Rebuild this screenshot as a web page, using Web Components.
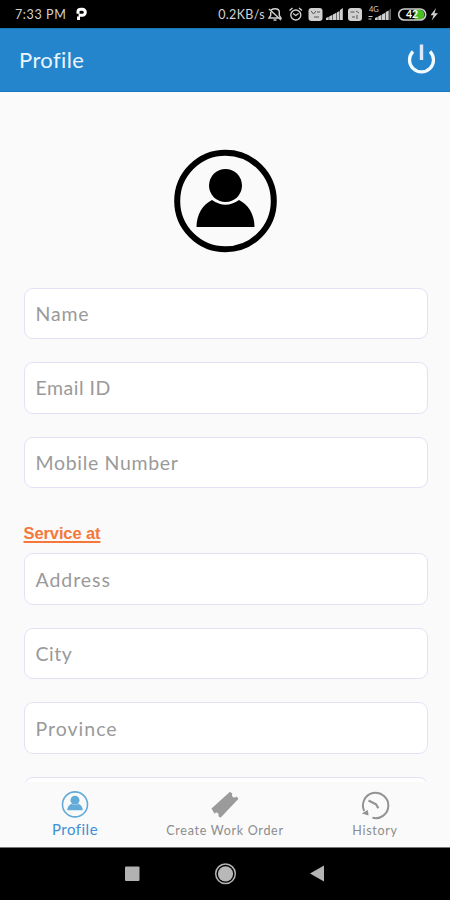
<!DOCTYPE html>
<html lang="en">
<head>
<meta charset="utf-8">
<title>Profile</title>
<style>
  body { margin: 0; background: #fafafa; }
</style>
</head>
<body>
<profile-screen></profile-screen>
<script>
const define = (name, html) => {
  const template = document.createElement('template');
  template.innerHTML = html;
  customElements.define(name, class extends HTMLElement {
    constructor() {
      super();
      this.attachShadow({ mode: 'open' }).append(template.content.cloneNode(true));
    }
  });
};

define('status-bar', `
<style>
  :host { display: flex; align-items: center; height: 28px; box-sizing: border-box; padding: 0 11px 0 15px; background: #000; color: #d2d2d2; font: 12.500px/28px Lato, sans-serif; }
  .time { width: 54px; white-space: nowrap; letter-spacing: .6px; padding-top: 1px; }
  .brand { margin-left: 7px; }
  .rate { margin-left: auto; margin-right: 2px; white-space: nowrap; font-size: 12.500px; letter-spacing: .35px; padding-top: 1px; }
  svg { display: block; flex: none; }
</style>
<span class="time">7:33 PM</span>
<svg class="brand" width="12" height="14" viewBox="0 0 12 14"><path d="M2.500 13V9.500M2 6.800V4.500Q2 2.200 5 2.200h1.300a3 3 0 0 1 0 6H2.600" fill="none" stroke="#fff" stroke-width="3"/></svg>
<span class="rate">0.2KB/s</span>
<svg width="172" height="28" viewBox="267 0 172 28" fill="none" stroke="#d0d0d0" stroke-width="1.400">
  <path d="M269 18h12l-1.700-2.500v-3.200q0-3.500-4.300-3.500t-4.300 3.500v3.200zM273.500 20h3M269 9l12 11"/>
  <circle cx="295.800" cy="15" r="5"/><path d="M289.500 10.500l3-2.500M302 10.500l-3-2.500M293 13.500l2.800 2 2.800-2"/>
  <g fill="#d0d0d0" stroke="none">
    <rect x="308.500" y="8" width="14" height="13" rx="3"/>
    <rect x="348" y="8" width="14" height="13" rx="3"/>
    <path d="M326 20v-2l2.700-1.300V20zM329.200 20v-3.600l3.300-1.600V20zM333 20v-5.600l3.300-1.600V20zM336.800 20v-7.500l2.700-1.500v9zM340 20V10l2.800-2v12z"/>
    <path d="M375 20v-2l2.700-1.300V20zM378.200 20v-3.600l3.300-1.600V20zM382 20v-5.600l3.200-1.600V20z"/>
    <path d="M385.700 20v-8l3-1.600V20z"/>
    <path d="M389.300 20V10l1.700-1.500V20z" fill="#666"/>
    <path d="M436 8l-5.500 7.200h3l-1.800 5.300 6.300-7.300h-3.500z"/>
  </g>
  <path d="M311 11l2.500 3 2.500-3M317 12h3M314 17h5M350.500 12h4M356 11l3 2M352 17h3M357 15v4" stroke="#555" stroke-width="1"/>
  <path d="M368.500 16.500h4M368.500 19h3" stroke-width="1.200"/>
  <text x="369" y="11.500" fill="#d0d0d0" stroke="none" font-family="Lato, sans-serif" font-size="7.500">4G</text>
  <path d="M414.500 9.200h4.500a5.300 5.300 0 0 1 0 10.600h-4.500z" fill="#48bd21" stroke="none"/>
  <rect x="398.700" y="9" width="27" height="11" rx="5.500" stroke-width="1.600"/>
  <text x="406" y="18.300" fill="#fff" stroke="none" font-family="Lato, sans-serif" font-weight="bold" font-size="10.500">42</text>
</svg>`);

define('app-header', `
<style>
  :host { display: flex; align-items: center; justify-content: space-between; height: 64px; box-sizing: border-box; padding: 0 13px 0 19px; background: #2485cc; color: #eaf6ff; border-top: 1px solid #1b78b8; border-bottom: 1px solid #1779c4; font: 22px/30px Lato, sans-serif; letter-spacing: .4px; }
  svg { display: block; }
</style>
<span><slot></slot></span>
<svg width="31" height="34" viewBox="406 43 31 34" fill="none"><path d="M413 51.500a12 12 0 1 0 17 0" stroke="#f4fbff" stroke-width="3.200"/><path d="M421.500 44.500v15.500" stroke="#dce8ff" stroke-width="3.400"/></svg>`);

define('profile-avatar', `
<style>
  :host { display: block; width: 104px; height: 104px; margin: 0 auto; }
  svg { display: block; width: 100%; height: 100%; }
</style>
<svg viewBox="0 0 104 104"><circle cx="51.500" cy="52" r="48.300" fill="none" stroke="currentColor" stroke-width="6"/><circle cx="51.500" cy="36.500" r="16.500" fill="currentColor"/><path d="M38 51q13.500 9.500 27 0C74 55.500 80.500 65 80.500 78h-58C22.500 65 29 55.500 38 51z" fill="currentColor"/></svg>`);

define('form-field', `
<style>
  :host { display: flex; align-items: center; height: 51.600px; box-sizing: border-box; margin-bottom: 23px; padding: 1px 11px 0; border: 1.500px solid #e3e2f5; border-radius: 9px; background: #fff; color: #9a9a9a; font: 19.500px/26px Lato, sans-serif; letter-spacing: var(--track, .5px); white-space: nowrap; }
</style>
<slot></slot>`);

define('section-label', `
<style>
  :host { display: block; height: 20px; margin: 34.300px 0 10.700px; color: #f5773a; font: bold 16.500px/20px "Liberation Sans", Arial, sans-serif; letter-spacing: -.1px; }
  span { text-decoration: underline; text-decoration-skip-ink: none; text-decoration-thickness: 1.500px; text-underline-offset: 2px; }
</style>
<span><slot></slot></span>`);

define('tab-item', `
<style>
  :host { display: flex; flex: 1; flex-direction: column; align-items: center; height: 65px; box-sizing: border-box; padding-top: 6px; color: #8c8c8c; font: 12.500px/20px Lato, sans-serif; letter-spacing: .72px; white-space: nowrap; }
  :host([active]) { color: #3e8fd4; font-size: 15px; letter-spacing: .5px; line-height: 16px; }
  .icon { height: 33px; display: flex; align-items: center; }
</style>
<span class="icon"><slot name="icon"></slot></span>
<span><slot></slot></span>`);

define('tab-bar', `
<style>
  :host { display: flex; height: 66px; box-sizing: border-box; border-bottom: 1px solid #777; background: #fafafa; }
</style>
<slot></slot>`);

define('system-nav', `
<style>
  :host { display: flex; justify-content: center; align-items: center; height: 52px; background: #000; }
  svg { display: block; }
</style>
<svg width="450" height="52" viewBox="0 848 450 52"><rect x="125" y="866.500" width="14.500" height="14.500" rx="1" fill="#b2b2b2"/><circle cx="225.500" cy="873.800" r="9.800" fill="none" stroke="#b4b4b4" stroke-width="1.500"/><circle cx="225.500" cy="873.800" r="7.600" fill="#b8b8b8"/><path d="M310 873.600l14-8v16z" fill="#b4b4b4"/></svg>`);

define('profile-screen', `
<style>
  :host { display: flex; flex-direction: column; width: 450px; height: 900px; overflow: hidden; background: #fafafa; color: #000; }
  main { flex: 1; min-height: 0; overflow: hidden; box-sizing: border-box; padding: 57px 22.500px 0 23.500px; }
  profile-avatar { margin-bottom: 34.500px; }
  tab-bar, status-bar, app-header, system-nav { flex: none; }
  svg { display: block; }
</style>
<status-bar></status-bar>
<app-header>Profile</app-header>
<main>
  <profile-avatar></profile-avatar>
  <form-field style="--track:.8px">Name</form-field>
  <form-field>Email ID</form-field>
  <form-field style="--track:.68px">Mobile Number</form-field>
  <section-label>Service at</section-label>
  <form-field style="--track:.95px">Address</form-field>
  <form-field>City</form-field>
  <form-field style="--track:1px">Province</form-field>
  <form-field></form-field>
</main>
<tab-bar>
  <tab-item active>Profile
    <svg slot="icon" width="28" height="28" viewBox="0 0 28 28" fill="#63abd9"><circle cx="14" cy="12.700" r="12.500" fill="none" stroke="#63abd9" stroke-width="1.600" transform="translate(0 .7)"/><circle cx="14" cy="9.200" r="4.500"/><path d="M10.500 12.800q3.500 2.400 7 0 4.300 2 4.300 6.500H6.200q0-4.500 4.300-6.500z"/></svg>
  </tab-item>
  <tab-item>Create Work Order
    <svg slot="icon" width="28" height="28" viewBox="0 0 28 28" fill="#9b9b9b"><path d="M.5 17.500L19 .8l2.200 1.700q-.8 3 1 3.800 1.800.6 3.300-.8l2 2.300L9.500 26.800l-2-1.500q.6-2.800-1-3.600-1.700-.4-3 1z"/></svg>
  </tab-item>
  <tab-item>History
    <svg slot="icon" width="30" height="30" viewBox="0 0 30 30" fill="none" stroke="#929292" stroke-width="2"><path d="M12.500 27.800A12.700 12.700 0 1 0 4.200 21"/><path d="M1.800 23.500l6-3.500.8 5.500z" fill="#929292" stroke="none"/><path d="M8.500 10.500l7.500 3.800 2.300 3.900" stroke-width="2.200"/></svg>
  </tab-item>
</tab-bar>
<system-nav></system-nav>`);
</script>
</body>
</html>
